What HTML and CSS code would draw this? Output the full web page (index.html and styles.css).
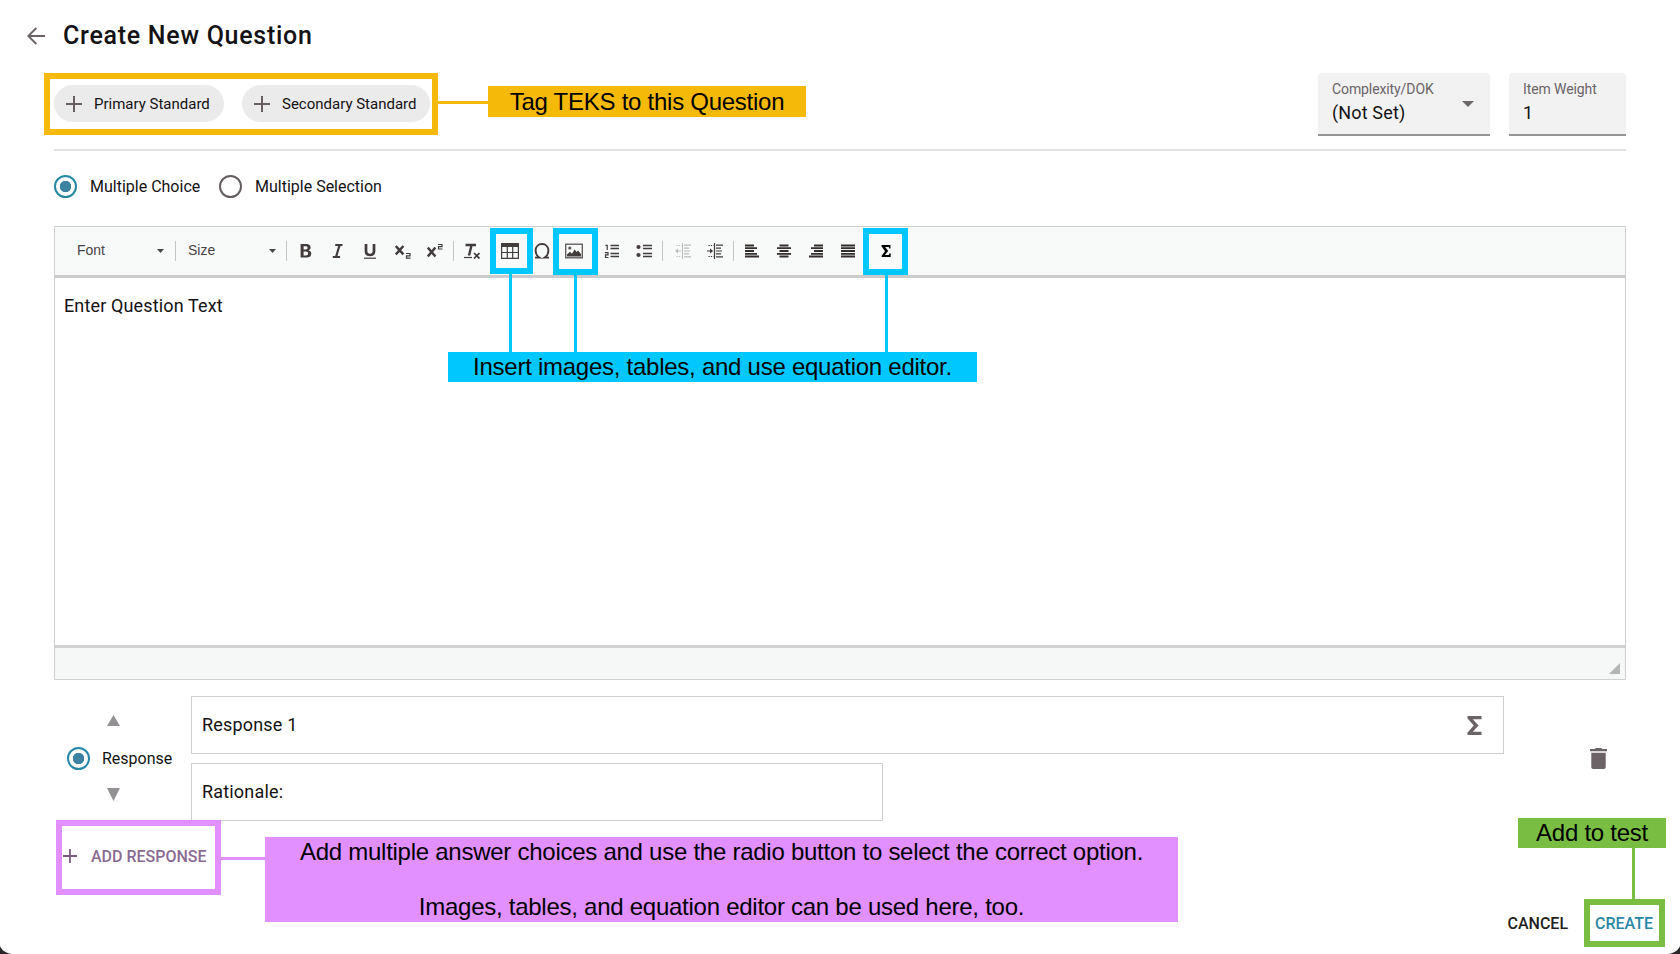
FILE: index.html
```html
<!DOCTYPE html>
<html lang="en">
<head>
<meta charset="utf-8">
<title>Create New Question</title>
<link rel="stylesheet" href="styles.css">
</head>
<body>
<div class="page">
  <header class="header">
    <svg class="back" width="18" height="18" viewBox="0 0 18 18"><path d="M18 9H1.5M9.3 1L1.3 9l8 8" fill="none" stroke="#6b6366" stroke-width="1.9"/></svg>
    <h1 class="title"><span>Create New Question</span></h1>
  </header>

  <section class="meta">
    <div class="chips">
      <button class="chip chip-primary"><svg width="16" height="16" viewBox="0 0 16 16"><path d="M8 0v16M0 8h16" stroke="#655d60" stroke-width="2"/></svg><span>Primary Standard</span></button>
      <button class="chip chip-secondary"><svg width="16" height="16" viewBox="0 0 16 16"><path d="M8 0v16M0 8h16" stroke="#655d60" stroke-width="2"/></svg><span>Secondary Standard</span></button>
    </div>
    <div class="fields">
      <div class="field field-dok">
        <div><div class="field-label">Complexity/DOK</div><div class="field-value">(Not Set)</div></div>
        <svg class="field-arrow" width="12" height="6" viewBox="0 0 12 6"><path d="M0 0h12L6 6z" fill="#6f686b"/></svg>
      </div>
      <div class="field field-weight">
        <div><div class="field-label">Item Weight</div><div class="field-value">1</div></div>
      </div>
    </div>
  </section>

  <section class="types">
    <span class="radio radio-on"></span><span class="type-label type-choice">Multiple Choice</span>
    <span class="radio"></span><span class="type-label">Multiple Selection</span>
  </section>

  <section class="editor">
    <div class="toolbar">
      <div class="combo combo-font"><span>Font</span><svg width="7" height="4" viewBox="0 0 7 4"><path d="M0 0h7L3.5 4z" fill="#484848"/></svg></div>
      <i class="sep"></i>
      <div class="combo combo-size"><span>Size</span><svg width="7" height="4" viewBox="0 0 7 4"><path d="M0 0h7L3.5 4z" fill="#484848"/></svg></div>
      <i class="sep"></i>
      <div class="tools tools-basic">
        <span class="tool"><svg viewBox="0 0 16 16"><path fill="#423c3c" fill-rule="evenodd" d="M2.600 1h5.600c2.800 0 4.400 1.300 4.400 3.500 0 1.500-.8 2.500-2.100 2.900 1.700.4 2.800 1.500 2.800 3.200 0 2.600-1.900 4-4.900 4H2.600zM5.600 3.200v3.300h2.100c1.300 0 1.900-.6 1.900-1.700s-.7-1.600-2-1.600zM5.600 8.600v3.800h2.300c1.500 0 2.200-.7 2.200-1.900s-.8-1.900-2.300-1.900z"/></svg></span>
        <span class="tool"><svg viewBox="0 0 16 16"><path d="M5.200 2h7.300M2.800 14h7.300M9.600 2L6 14" fill="none" stroke="#423c3c" stroke-width="2.200"/></svg></span>
        <span class="tool"><svg viewBox="0 0 16 16"><path d="M4 1v7c0 2.800 1.400 4 4 4s4-1.200 4-4V1" fill="none" stroke="#423c3c" stroke-width="2.700"/><path d="M2 15.200h12" stroke="#423c3c" stroke-width="1.200"/></svg></span>
        <span class="tool"><svg viewBox="0 0 16 16"><path d="M.8 3l7.600 8.400M8.400 3L.8 11.400" stroke="#423c3c" stroke-width="2.500"/><path d="M11 10.500h4v2.400h-3.500v2.300H15.500" fill="none" stroke="#423c3c" stroke-width="1.200"/></svg></span>
        <span class="tool"><svg viewBox="0 0 16 16"><path d="M.8 4.500l7.600 9M8.400 4.500l-7.600 9" stroke="#423c3c" stroke-width="2.500"/><path d="M11 1.500h4v2.200h-3.500V6H15.500" fill="none" stroke="#423c3c" stroke-width="1.200"/></svg></span>
      </div>
      <i class="sep"></i>
      <div class="tools tools-insert">
        <span class="tool tool-clear"><svg viewBox="0 0 16 16"><path d="M1.500 2h10.500M7.600 2L5 12.500" fill="none" stroke="#423c3c" stroke-width="2.400"/><path d="M0 14.500h8" stroke="#423c3c" stroke-width="1.200"/><path d="M10 10l5.500 5.500M15.500 10L10 15.500" stroke="#423c3c" stroke-width="1.700"/></svg></span>
        <span class="tool"><svg class="wide" viewBox="0 0 18 16"><path d="M0 0h18v4H0z" fill="#423c3c"/><path d="M.6 3v12.400h16.800V3M0 9.500h18M6.300 4v12M11.700 4v12" fill="none" stroke="#423c3c" stroke-width="1.200"/></svg></span>
        <span class="tool"><svg viewBox="0 0 16 16"><path d="M1 14.600h4.300C2.500 12.800 1.600 10 1.600 7.600 1.600 3.600 4.300 1 8 1s6.400 2.600 6.400 6.600c0 2.400-.9 5.200-3.700 7H15" fill="none" stroke="#423c3c" stroke-width="1.900"/></svg></span>
        <span class="tool tool-image"><svg class="wide" viewBox="0 0 18 16"><rect x=".7" y="1.200" width="16.600" height="13.600" fill="none" stroke="#5c5656" stroke-width="1.300"/><circle cx="4.800" cy="5" r="1.600" fill="#5c5656"/><path d="M2 13.500v-2l3-2.800 2 2 2.700-4.200 1.800 2.500 1.500-1.500L16 11v2.500z" fill="#423c3c"/></svg></span>
        <span class="tool"><svg viewBox="0 0 16 16"><path d="M6.500 2.500h8.500M6.500 5.500h8.500M6.500 10.500h8.500M6.500 13.500h8.500" stroke="#423c3c" stroke-width="1.300"/><path d="M1.500 2.300h1.700V7M1 9.700h3v2.200H1.500v2.600h3" fill="none" stroke="#423c3c" stroke-width="1.200"/></svg></span>
        <span class="tool"><svg viewBox="0 0 16 16"><path d="M7 2.500h9M7 5.500h9M7 10.500h9M7 13.500h9" stroke="#423c3c" stroke-width="1.300"/><circle cx="2.500" cy="4" r="2.100" fill="#423c3c"/><circle cx="2.500" cy="12" r="2.100" fill="#423c3c"/></svg></span>
      </div>
      <i class="sep"></i>
      <div class="tools tools-indent">
        <span class="tool"><svg class="dim" viewBox="0 0 16 16"><path d="M9 2.200h7M9 5.200h5M9 8h6M9 10.800h5M9 13.800h7" stroke="#423c3c" stroke-width="1.200"/><path d="M1.500 2.500h5M1.500 13.500h5" stroke="#423c3c" stroke-width="1.200" stroke-dasharray="1.300 1"/><path d="M7.500 0v16" stroke="#423c3c" stroke-width="1"/><path d="M0 8l3-2.500V7.400H6v1.200H3v1.900z" fill="#423c3c"/></svg></span>
        <span class="tool"><svg viewBox="0 0 16 16"><path d="M9 2.200h7M9 5.200h5M9 8h6M9 10.800h5M9 13.800h7" stroke="#423c3c" stroke-width="1.200"/><path d="M1.500 2.500h5M1.500 13.500h5" stroke="#423c3c" stroke-width="1.200" stroke-dasharray="1.300 1"/><path d="M7.500 0v16" stroke="#423c3c" stroke-width="1.200"/><path d="M6.200 8L3 5.500v1.900H0v1.200h3v1.900z" fill="#423c3c"/></svg></span>
      </div>
      <i class="sep"></i>
      <div class="tools tools-align">
        <span class="tool"><svg viewBox="0 0 16 16"><path d="M1 2.500h9M1 5.200h12M1 8h9M1 10.800h12M1 13.500h14" stroke="#332d2d" stroke-width="1.800"/></svg></span>
        <span class="tool"><svg viewBox="0 0 16 16"><path d="M3.500 2.500h9M1 5.200h14M3.500 8h9M1 10.800h14M3.500 13.500h9" stroke="#332d2d" stroke-width="1.800"/></svg></span>
        <span class="tool"><svg viewBox="0 0 16 16"><path d="M6 2.500h9M3 5.200h12M6 8h9M3 10.800h12M1 13.500h14" stroke="#332d2d" stroke-width="1.800"/></svg></span>
        <span class="tool"><svg viewBox="0 0 16 16"><path d="M1 2.500h14M1 5.200h14M1 8h14M1 10.800h14M1 13.500h14" stroke="#332d2d" stroke-width="1.800"/></svg></span>
      </div>
      <span class="tool"><svg viewBox="0 0 16 16"><path d="M3.500 2h9v3.400h-1.200L10.800 4H7.200l3 4-3.300 4.100h3.900l.5-1.600h1.400V14h-9v-1.200L7 8.200 3.500 3.300z" fill="#000"/></svg></span>
    </div>
    <div class="content"><span>Enter Question Text</span></div>
    <div class="editor-foot"><svg width="11" height="11" viewBox="0 0 11 11"><path d="M11 0v11H0z" fill="#b5b5b5"/></svg></div>
  </section>

  <section class="response">
    <div class="order">
      <svg class="up" width="13" height="11" viewBox="0 0 13 11"><path d="M6.500 0L13 11H0z" fill="#929092"/></svg>
      <div class="pick"><span class="radio radio-on"></span><span class="pick-label">Response</span></div>
      <svg class="down" width="13" height="13" viewBox="0 0 13 13"><path d="M0 0h13L6.500 13z" fill="#929092"/></svg>
    </div>
    <div class="inputs">
      <div class="input input-answer"><span>Response 1</span><svg width="15" height="19" viewBox="0 0 15 19"><path d="M.5 0H14.500v3.200H5.800L11.500 9.500l-5.700 6.300h8.700V19H.5v-2.500l6.300-7-6.300-7z" fill="#6b6366"/></svg></div>
      <div class="input input-rationale"><span>Rationale:</span></div>
    </div>
    <svg class="trash" width="17" height="21" viewBox="0 0 17 21"><path d="M0 1h4.800l1-1h5.400l1 1H17v2.300H0zM1.300 4.800h14.400V19c0 1.200-.8 2-2 2H3.300c-1.200 0-2-.8-2-2z" fill="#6b6366"/></svg>
  </section>

  <footer class="actions">
    <button class="add"><svg width="14" height="14" viewBox="0 0 14 14"><path d="M7 0v14M0 7h14" stroke="#7a5b80" stroke-width="1.800"/></svg><span>ADD RESPONSE</span></button>
    <div class="submit"><button class="cancel">CANCEL</button><button class="create">CREATE</button></div>
  </footer>

  <div class="frame frame-tags"></div><div class="line line-tags"></div>
  <div class="note note-tags"><span>Tag TEKS to this Question</span></div>

  <div class="frame cyan frame-table"></div><div class="frame cyan frame-image"></div><div class="frame cyan frame-sum"></div>
  <div class="line line-table"></div><div class="line line-image"></div><div class="line line-sum"></div>
  <div class="note note-insert"><span>Insert images, tables, and use equation editor.</span></div>

  <div class="frame frame-add"></div><div class="line line-add"></div>
  <div class="note note-add"><span>Add multiple answer choices and use the radio button to select the correct option.</span><span>Images, tables, and equation editor can be used here, too.</span></div>

  <div class="frame frame-create"></div><div class="line line-create"></div>
  <div class="note note-create"><span>Add to test</span></div>

  <svg class="corner corner-left" width="12" height="8" viewBox="0 0 12 8"><path d="M0 0C1.500 4 6 7.500 12 8H0z" fill="#2b2628"/></svg>
  <svg class="corner corner-right" width="12" height="8" viewBox="0 0 12 8"><path d="M12 0C10.500 4 6 7.500 0 8h12z" fill="#2b2628"/></svg>
</div>
</body>
</html>
```
FILE: styles.css
```css
* { box-sizing: border-box; }
body { margin: 0; background: #fff; color: #141214; font-family: Roboto, sans-serif; }
button { border: 0; background: none; padding: 0; font: inherit; color: inherit; white-space: nowrap; }
svg { display: block; flex: none; }
span { white-space: nowrap; }

.page { position: relative; width: 1680px; height: 954px; overflow: hidden; padding: 0 54px; display: flex; flex-direction: column; }

.header { display: flex; align-items: center; gap: 18px; height: 71px; margin: 0 0 2px -27px; }
.title { margin: 0; font-size: 25px; line-height: 30px; font-weight: 500; letter-spacing: .73px; }

.meta { height: 78px; border-bottom: 2px solid #e2e2e2; display: flex; justify-content: space-between; }
.chips { display: flex; gap: 18px; padding-top: 12px; }
.chip { display: flex; align-items: center; gap: 12px; height: 37px; border-radius: 19px; background: #ebebeb; padding-left: 12px; font-size: 15px; }
.chip-primary { width: 170px; }
.chip-secondary { width: 188px; }
.fields { display: flex; gap: 19px; height: 63px; }
.field { display: flex; background: #f2f2f2; border-bottom: 2px solid #969496; border-radius: 4px 4px 0 0; padding: 8px 16px 0 14px; justify-content: space-between; }
.field-dok { width: 172px; }
.field-weight { width: 117px; }
.field-label { font-size: 14px; line-height: 17px; letter-spacing: -.1px; color: #6a6467; }
.field-value { font-size: 18px; line-height: 22px; margin-top: 4px; letter-spacing: .15px; }
.field-arrow { margin-top: 20px; }

.types { display: flex; align-items: center; height: 75px; padding-bottom: 4px; }
.radio { width: 23px; height: 23px; border: 2px solid #645d5f; border-radius: 50%; flex: none; }
.radio-on { border-color: #2387a5; background: radial-gradient(circle, #3b83a0 0 5.5px, transparent 6px); }
.type-label { font-size: 16px; margin-left: 13px; padding-bottom: 1px; }
.type-choice { width: 129px; }

.editor { height: 454px; border: 1px solid #d1d1d1; display: flex; flex-direction: column; }
.toolbar { height: 51px; flex: none; background: #f8f9f9; border-bottom: 3px solid #cbcbcb; display: flex; align-items: center; }
.combo { display: flex; align-items: center; justify-content: space-between; font-family: "Liberation Sans", sans-serif; font-size: 14px; color: #484444; }
.combo span { padding-bottom: 2px; }
.combo-font { width: 87px; margin: 0 11px 0 22px; }
.combo-size { width: 88px; margin: 0 10px 0 12px; }
.sep { width: 1px; height: 20px; background: #c4c4c4; flex: none; }
.tools { display: flex; }
.tool { width: 32.200px; display: flex; justify-content: center; flex: none; }
.tool svg { width: 16px; height: 16px; }
.tool svg.wide { width: 18px; }
.tool svg.dim { opacity: .32; }
.tool-clear { margin-right: 5.600px; }
.tool-image { margin-right: 5.800px; }
.tools-basic { margin: 0 2px 0 3px; }
.tools-insert { margin: 0 2px; }
.tools-indent { margin: 0 2px 0 3px; }
.tools-align { margin: 0 5.500px 0 2px; }
.content { flex: 1; padding: 17px 9px; font-size: 18px; line-height: 21px; letter-spacing: .14px; }
.editor-foot { height: 34px; border-top: 3px solid #d0d0d0; background: #f6f7f7; display: flex; justify-content: flex-end; align-items: flex-end; padding: 0 5px 5px 0; }

.response { display: flex; height: 141px; padding-top: 16px; }
.order { width: 137px; padding-left: 13px; display: flex; flex-direction: column; }
.up { margin: 19px 0 0 40px; }
.pick { display: flex; align-items: center; gap: 12px; margin: 21px 0 18px; font-size: 16px; }
.pick-label { padding-bottom: 1px; }
.down { margin-left: 40px; }
.inputs { width: 1313px; display: flex; flex-direction: column; gap: 9px; }
.input { height: 58px; border: 1px solid #cfcfcf; display: flex; align-items: center; justify-content: space-between; padding: 0 21px 0 10px; font-size: 18px; letter-spacing: .18px; }
.input span { padding-bottom: 2px; }
.input-rationale { width: 692px; }
.trash { margin: 52px 0 0 86px; }

.actions { display: flex; justify-content: space-between; height: 133px; }
.add { display: flex; align-items: center; gap: 14px; height: 34px; margin: 18px 0 0 9px; font-size: 16px; font-weight: 500; color: #8a6b92; }
.submit { display: flex; align-items: center; gap: 27px; height: 30px; margin: 87px -27px 0 0; font-size: 16px; font-weight: 500; letter-spacing: .1px; }
.cancel { color: #231f20; }
.create { color: #2a86a5; }

/* Annotation overlays */
.frame, .line, .note, .corner { position: absolute; }
.frame { border: 6px solid; }
.note { font-family: "Liberation Sans", sans-serif; font-size: 24px; line-height: 28px; letter-spacing: -.26px; color: #000; display: flex; flex-direction: column; align-items: center; }
.frame-tags { left: 44px; top: 73px; width: 394px; height: 62px; border-color: #f5b90a; }
.line-tags { left: 438px; top: 101px; width: 50px; height: 3px; background: #f5b90a; }
.note-tags { left: 488px; top: 86px; width: 318px; height: 31px; background: #f5b90a; padding-top: 2px; }
.cyan { border-color: #00c8ff; border-width: 6px; top: 228px; }
.frame-table { left: 490px; width: 43px; height: 46px; }
.frame-image { left: 553px; width: 45px; height: 47px; }
.frame-sum { left: 863px; width: 45px; height: 47px; }
.line-table, .line-image, .line-sum { top: 274px; width: 3px; height: 79px; background: #00c8ff; }
.line-table { left: 509px; }
.line-image { left: 574px; }
.line-sum { left: 885px; }
.note-insert { left: 448px; top: 352px; width: 529px; height: 30px; background: #00c8ff; padding-top: 1px; }
.frame-add { left: 56px; top: 820px; width: 165px; height: 75px; border-color: #e28fff; }
.line-add { left: 221px; top: 857px; width: 44px; height: 3px; background: #e28fff; }
.note-add { left: 265px; top: 837px; width: 913px; height: 85px; background: #e28fff; padding-top: 1px; gap: 27px; }
.frame-create { left: 1584px; top: 899px; width: 81px; height: 48px; border-color: #79be43; }
.line-create { left: 1632px; top: 848px; width: 3px; height: 51px; background: #79be43; }
.note-create { left: 1518px; top: 818px; width: 148px; height: 30px; background: #79be43; padding-top: 1px; }
.corner-left { left: 0; bottom: 0; }
.corner-right { right: 0; bottom: 0; }
```
